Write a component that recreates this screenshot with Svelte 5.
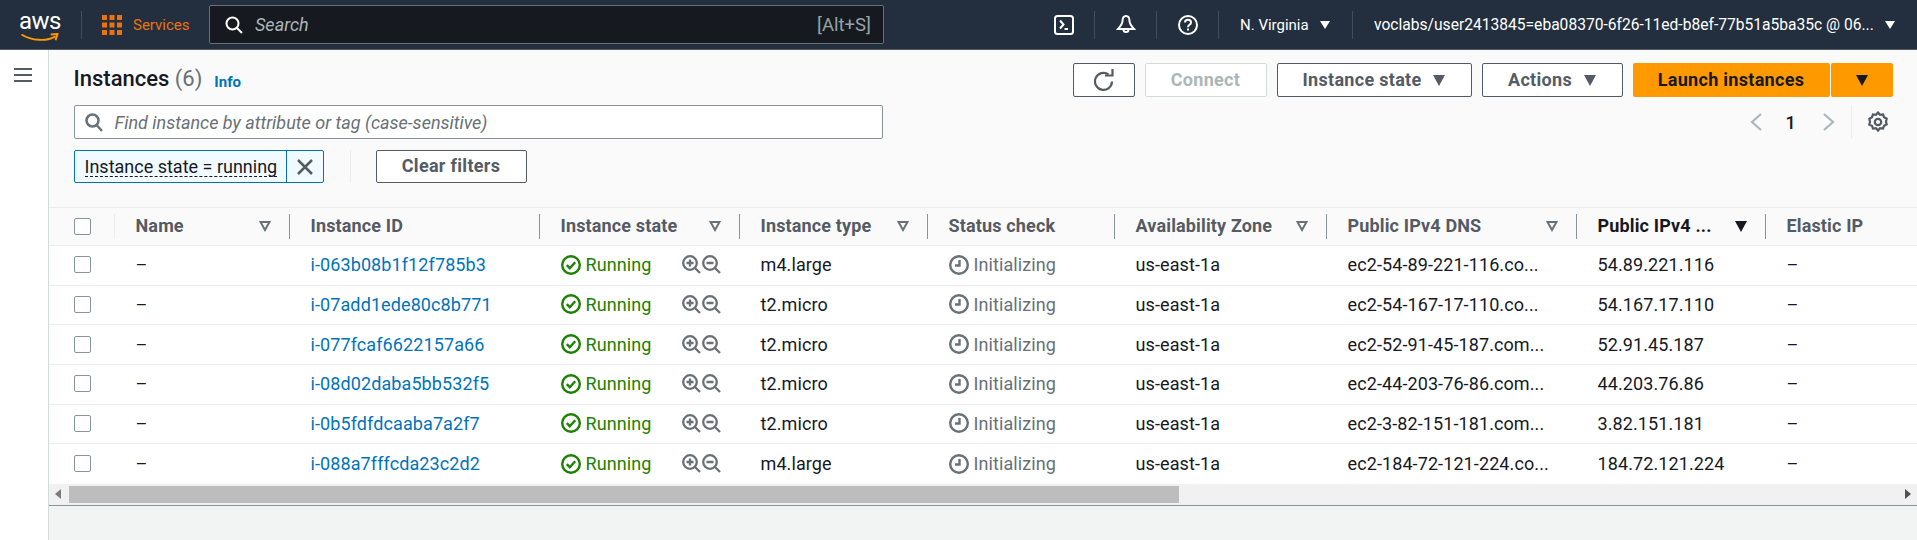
<script>
  const columns = [
    { label: 'Name', width: 175, filter: true },
    { label: 'Instance ID', width: 250 },
    { label: 'Instance state', width: 200, filter: true },
    { label: 'Instance type', width: 188, filter: true },
    { label: 'Status check', width: 187 },
    { label: 'Availability Zone', width: 212, filter: true },
    { label: 'Public IPv4 DNS', width: 250, filter: true },
    { label: 'Public IPv4 ...', width: 189, sorted: true },
    { label: 'Elastic IP', width: 151, last: true }
  ];

  const instances = [
    { id: 'i-063b08b1f12f785b3', type: 'm4.large', dns: 'ec2-54-89-221-116.co...', ip: '54.89.221.116' },
    { id: 'i-07add1ede80c8b771', type: 't2.micro', dns: 'ec2-54-167-17-110.co...', ip: '54.167.17.110' },
    { id: 'i-077fcaf6622157a66', type: 't2.micro', dns: 'ec2-52-91-45-187.com...', ip: '52.91.45.187' },
    { id: 'i-08d02daba5bb532f5', type: 't2.micro', dns: 'ec2-44-203-76-86.com...', ip: '44.203.76.86' },
    { id: 'i-0b5fdfdcaaba7a2f7', type: 't2.micro', dns: 'ec2-3-82-151-181.com...', ip: '3.82.151.181' },
    { id: 'i-088a7fffcda23c2d2', type: 'm4.large', dns: 'ec2-184-72-121-224.co...', ip: '184.72.121.224' }
  ];
</script>

<div class="console">
  <header class="topbar">
    <div class="logo">
      <span class="logo-text">aws</span>
      <svg class="smile" width="40" height="10" viewBox="0 0 40 10">
        <path d="M1 1.5C11 8 27 9 36 3.5" fill="none" stroke="#ff9900" stroke-width="2" />
        <path d="M31 1.5l7-.5-2 6.500" fill="none" stroke="#ff9900" stroke-width="2" />
      </svg>
    </div>
    <span class="bar-sep first"></span>
    <svg class="grid-icon" width="20" height="20" viewBox="0 0 20 20" fill="#ec7211">
      {#each [0, 7.500, 15] as y}
        {#each [0, 7.500, 15] as x}
          <rect {x} {y} width="5" height="5" />
        {/each}
      {/each}
    </svg>
    <span class="services">Services</span>
    <div class="global-search">
      <svg width="18" height="18" viewBox="0 0 18 18" fill="none" stroke="#fff" stroke-width="2">
        <circle cx="7.500" cy="7.500" r="6" />
        <path d="M12 12l5 5" />
      </svg>
      <span class="global-placeholder">Search</span>
      <span class="shortcut">[Alt+S]</span>
    </div>
    <svg class="bar-icon shell" width="20" height="20" viewBox="0 0 20 20" fill="none" stroke="#fff" stroke-width="2">
      <rect x="1" y="1" width="18" height="18" rx="2.500" />
      <path d="M6 5.500l3.500 4L6 13.500M10.500 14H14" />
    </svg>
    <span class="bar-sep"></span>
    <svg class="bar-icon" width="20" height="22" viewBox="0 0 20 22" fill="none" stroke="#fff" stroke-width="2">
      <path d="M10 2C7.500 2 6.500 4.500 6.500 7c0 3-2 5-4.500 8h16c-2.500-3-4.500-5-4.500-8 0-2.500-1-5-3.500-5z" />
      <path d="M7.500 15.500a2.500 2.500 0 0 0 5 0" />
    </svg>
    <span class="bar-sep"></span>
    <svg class="bar-icon" width="20" height="20" viewBox="0 0 20 20" fill="none" stroke="#fff" stroke-width="2">
      <circle cx="10" cy="10" r="9" />
      <path d="M7 7.500C7 5.500 8.500 4.800 10 4.800c1.700 0 3 1 3 2.600 0 2.400-3 2.400-3 4.800" />
      <path d="M10 13.500v2" />
    </svg>
    <span class="bar-sep"></span>
    <span class="region">N. Virginia</span>
    <span class="bar-caret"></span>
    <span class="bar-sep region-sep"></span>
    <span class="account">voclabs/user2413845=eba08370-6f26-11ed-b8ef-77b51a5ba35c @ 06...</span>
    <span class="bar-caret"></span>
  </header>

  <div class="body">
    <nav class="sidenav">
      <svg width="18" height="16" viewBox="0 0 18 16" fill="none" stroke="#545b64" stroke-width="2">
        <path d="M0 2h18M0 8h18M0 14h18" />
      </svg>
    </nav>

    <main class="main">
      <section class="tools">
        <div class="tools-row title-row">
          <h1>Instances <span class="count">(6)</span></h1>
          <a class="info" href="#info">Info</a>
          <div class="actions">
            <button class="btn refresh" aria-label="Refresh">
              <svg width="22" height="24" viewBox="0 0 22 24" fill="none" stroke="#545b64" stroke-width="2.200">
                <path d="M19 13.500a8.500 8.500 0 1 1-3.500-7" />
                <path d="M12 7.500h7.500V1" />
              </svg>
            </button>
            <button class="btn connect" disabled>Connect</button>
            <button class="btn state">Instance state <span class="caret"></span></button>
            <button class="btn menu">Actions <span class="caret"></span></button>
            <div class="split">
              <button class="btn primary">Launch instances</button>
              <button class="btn primary arrow" aria-label="More"><span class="caret dark"></span></button>
            </div>
          </div>
        </div>

        <div class="tools-row filter-row">
          <div class="filter">
            <svg width="18" height="19" viewBox="0 0 18 19" fill="none" stroke="#687078" stroke-width="2.500">
              <circle cx="7.500" cy="7.500" r="6" />
              <path d="M12 12.500l5 5.500" />
            </svg>
            <span class="filter-placeholder">Find instance by attribute or tag (case-sensitive)</span>
          </div>
          <div class="pager">
            <svg width="13" height="20" viewBox="0 0 13 20" fill="none" stroke="#aab7b8" stroke-width="2.200"><path d="M11 2L2 10l9 8" /></svg>
            <span class="page-num">1</span>
            <svg width="13" height="20" viewBox="0 0 13 20" fill="none" stroke="#aab7b8" stroke-width="2.200"><path d="M2 2l9 8-9 8" /></svg>
            <span class="pager-sep"></span>
            <svg width="20" height="22" viewBox="0 0 20 22" fill="none" stroke="#545b64" stroke-width="2.200">
              <path d="M10 1.500l2 2.300 3-.4 1 2.800 2.700 1.300-.7 3 .7 3-2.700 1.300-1 2.800-3-.4-2 2.300-2-2.300-3 .4-1-2.800L1.300 13.700l.7-3-.7-3L4 6.200l1-2.800 3 .4z" />
              <circle cx="10" cy="11" r="3.200" />
            </svg>
          </div>
        </div>

        <div class="tools-row token-row">
          <div class="token">
            <span class="token-label"><span class="dashed">Instance state = running</span></span>
            <span class="token-x">
              <svg width="16" height="16" viewBox="0 0 16 16" fill="none" stroke="#545b64" stroke-width="2.500">
                <path d="M1 1l14 14M15 1L1 15" />
              </svg>
            </span>
          </div>
          <span class="token-sep"></span>
          <button class="btn clear">Clear filters</button>
        </div>
      </section>

      <div class="table-wrap">
        <table>
          <colgroup>
            <col style="width: 66px" />
            {#each columns as col}
              <col style="width: {col.width}px" />
            {/each}
          </colgroup>
          <thead>
            <tr>
              <th><div class="th-in check-col"><span class="checkbox"></span></div></th>
              {#each columns as col}
                <th>
                  <div class="th-in" class:last={col.last} class:sorted={col.sorted}>
                    <span class="th-label">{col.label}</span>
                    {#if col.sorted}
                      <svg width="12" height="11" viewBox="0 0 12 11"><path d="M0 0h12L6 11z" fill="#16191f" /></svg>
                    {:else if col.filter}
                      <svg width="12" height="11" viewBox="0 0 12 11"><path d="M1.500 1h9L6 9z" fill="none" stroke="#687078" stroke-width="2" /></svg>
                    {/if}
                  </div>
                </th>
              {/each}
            </tr>
          </thead>
          <tbody>
            {#each instances as row}
              <tr>
                <td class="check-cell"><span class="checkbox"></span></td>
                <td>–</td>
                <td><a class="link" href="#{row.id}">{row.id}</a></td>
                <td>
                  <div class="state-cell">
                    <svg width="20" height="20" viewBox="0 0 20 20" fill="none" stroke="#1d8102" stroke-width="2.400">
                      <circle cx="10" cy="10" r="8.800" />
                      <path d="M5.800 10.200l3 3 5.400-6" />
                    </svg>
                    <span class="running">Running</span>
                    <span class="zooms">
                      <svg width="19" height="19" viewBox="0 0 19 19" fill="none" stroke="#687078" stroke-width="2.300">
                        <circle cx="8" cy="8" r="6.800" />
                        <path d="M13 13l5 5M8 4.500v7M4.500 8h7" />
                      </svg>
                      <svg width="19" height="19" viewBox="0 0 19 19" fill="none" stroke="#687078" stroke-width="2.300">
                        <circle cx="8" cy="8" r="6.800" />
                        <path d="M13 13l5 5M4.500 8h7" />
                      </svg>
                    </span>
                  </div>
                </td>
                <td>{row.type}</td>
                <td>
                  <div class="status-cell">
                    <svg width="20" height="20" viewBox="0 0 20 20" fill="none" stroke="#687078" stroke-width="2.400">
                      <circle cx="10" cy="10" r="8.800" />
                      <path d="M10.500 5v5.500H6" />
                    </svg>
                    <span>Initializing</span>
                  </div>
                </td>
                <td>us-east-1a</td>
                <td>{row.dns}</td>
                <td>{row.ip}</td>
                <td>–</td>
              </tr>
            {/each}
          </tbody>
        </table>
      </div>

      <div class="scrollbar">
        <span class="arrow-left"></span>
        <span class="thumb"></span>
        <span class="arrow-right"></span>
      </div>
      <div class="footer"></div>
    </main>
  </div>
</div>

<style>
  :global(body) {
    margin: 0;
    background: #fff;
  }

  .console {
    width: 1917px;
    height: 540px;
    overflow: hidden;
    display: flex;
    flex-direction: column;
    font-family: Roboto, "Noto Sans", sans-serif;
    font-size: 18px;
    color: #16191f;
  }

  .topbar {
    height: 49px;
    flex: none;
    display: flex;
    align-items: center;
    background: #232f3e;
    border-bottom: 1px solid #545b64;
    padding-left: 20px;
    color: #fff;
  }

  .logo {
    width: 40px;
    height: 36px;
    display: flex;
    flex-direction: column;
    align-items: center;
  }

  .logo-text {
    font-size: 24px;
    line-height: 24px;
    letter-spacing: -0.5px;
    height: 25px;
    margin-top: 2px;
  }

  .smile {
    display: block;
  }

  .bar-sep {
    width: 1px;
    height: 28px;
    background: #414d5c;
    margin: 0 21px 0 20px;
  }

  .bar-sep.first {
    margin: 0 20px 0 21px;
  }

  .bar-sep.region-sep {
    margin: 0 21px 0 22px;
  }

  .grid-icon {
    margin-right: 11px;
  }

  .services {
    width: 56px;
    color: #ec7211;
    font-size: 15px;
    margin-right: 20px;
    white-space: nowrap;
  }

  .global-search {
    width: 646px;
    height: 37px;
    border: 1px solid #687078;
    border-radius: 2px;
    background: #16191f;
    display: flex;
    align-items: center;
    padding-left: 15px;
    padding-right: 12px;
    margin-right: 170px;
  }

  .global-placeholder {
    margin-left: 12px;
    font-style: italic;
    color: #aab7b8;
    font-size: 18px;
  }

  .shortcut {
    margin-left: auto;
    color: #95a5a6;
    font-size: 18.5px;
  }

  .region {
    width: 71px;
    margin-right: 9px;
    font-size: 15px;
    white-space: nowrap;
  }

  .account {
    width: 511px;
    font-size: 15.6px;
    white-space: nowrap;
  }

  .bar-caret {
    width: 0;
    height: 0;
    border-left: 5px solid transparent;
    border-right: 5px solid transparent;
    border-top: 8px solid #fff;
  }

  .body {
    flex: 1;
    display: flex;
    min-height: 0;
  }

  .sidenav {
    width: 34px;
    flex: none;
    border-right: 1px solid #d5dbdb;
    background: #fff;
    padding: 17px 0 0 14px;
  }

  .sidenav svg {
    display: block;
  }

  .main {
    flex: 1;
    min-width: 0;
    display: flex;
    flex-direction: column;
    background: #fafafa;
  }

  .tools {
    padding: 13px 24.5px 24px;
  }

  .tools-row {
    display: flex;
    align-items: center;
  }

  .title-row {
    height: 34px;
  }

  h1 {
    margin: 0 0 2px;
    font-size: 22px;
    font-weight: 500;
    line-height: 30px;
    color: #16191f;
  }

  .count {
    font-weight: 400;
    color: #687078;
  }

  .info {
    margin-left: 12px;
    margin-top: 3px;
    color: #0073bb;
    font-size: 15px;
    font-weight: 700;
    text-decoration: none;
  }

  .actions {
    margin-left: auto;
    display: flex;
    gap: 10px;
  }

  .btn {
    height: 34px;
    box-sizing: border-box;
    border: 1px solid #545b64;
    border-radius: 2px;
    background: #fff;
    color: #545b64;
    font-family: inherit;
    font-size: 18px;
    font-weight: 700;
    letter-spacing: 0.3px;
    padding: 0 0 2px;
    display: flex;
    align-items: center;
    justify-content: center;
  }

  .refresh { width: 62px; padding: 0; }
  .connect {
    width: 122px;
    border-color: #d5dbdb;
    color: #aab7b8;
  }
  .state { width: 195px; gap: 12px; }
  .menu { width: 141px; gap: 12px; }

  .split {
    display: flex;
    gap: 1px;
  }

  .primary {
    width: 197px;
    background: #ff9900;
    border-color: #ff9900;
    color: #16191f;
  }

  .arrow { width: 62px; padding: 0; }

  .caret {
    width: 0;
    height: 0;
    margin-top: 2px;
    border-left: 6.5px solid transparent;
    border-right: 6.5px solid transparent;
    border-top: 11px solid #545b64;
  }

  .caret.dark {
    border-top-color: #16191f;
    margin-top: 0;
  }

  .filter-row {
    margin-top: 8px;
    height: 34px;
    justify-content: space-between;
  }

  .filter {
    width: 809px;
    height: 34px;
    box-sizing: border-box;
    border: 1px solid #879596;
    border-radius: 2px;
    background: #fff;
    display: flex;
    align-items: center;
    padding-left: 10px;
  }

  .filter-placeholder {
    margin-left: 12px;
    font-style: italic;
    color: #687078;
    font-size: 18px;
  }

  .pager {
    height: 34px;
    display: flex;
    align-items: center;
    margin-right: 5px;
  }

  .page-num {
    width: 10px;
    margin: 0 26px 0 23px;
    font-weight: 500;
    text-align: center;
  }

  .pager-sep {
    width: 1px;
    height: 34px;
    background: #eaeded;
    margin: 0 16px;
  }

  .token-row {
    margin-top: 11px;
    height: 33px;
  }

  .token {
    width: 250px;
    height: 33px;
    box-sizing: border-box;
    display: flex;
    border: 1px solid #0073bb;
    border-radius: 2px;
    background: #f1faff;
  }

  .token-label {
    flex: 1;
    display: flex;
    align-items: center;
    padding-left: 10px;
    color: #16191f;
    white-space: nowrap;
  }

  .dashed {
    border-bottom: 1px dashed #16191f;
    line-height: 19px;
  }

  .token-x {
    width: 36px;
    border-left: 1px solid #0073bb;
    display: flex;
    align-items: center;
    justify-content: center;
  }

  .token-sep {
    width: 1px;
    height: 33px;
    background: #eaeded;
    margin: 0 26px;
  }

  .clear {
    width: 151px;
    height: 33px;
    margin-left: -1px;
  }

  .table-wrap {
    overflow: hidden;
  }

  table {
    table-layout: fixed;
    width: 1868px;
    border-collapse: separate;
    border-spacing: 0;
  }

  th {
    height: 39px;
    box-sizing: border-box;
    padding: 0;
    background: #fafafa;
    border-top: 1px solid #eaeded;
    border-bottom: 1px solid #eaeded;
    font-weight: 700;
    text-align: left;
    color: #545b64;
    white-space: nowrap;
  }

  .th-in {
    height: 25px;
    display: flex;
    align-items: center;
    justify-content: space-between;
    padding: 0 18px 0 20.5px;
    border-right: 1px solid #879596;
  }

  .th-label {
    letter-spacing: 0.15px;
    margin-top: -2px;
  }

  .th-in.last {
    border-right: none;
  }

  .th-in.sorted {
    color: #16191f;
  }

  .th-in.check-col {
    padding-left: 24.5px;
    border-right-color: #eaeded;
  }

  td {
    height: 39.67px;
    box-sizing: border-box;
    padding: 0 0 1px 20.5px;
    background: #fff;
    border-bottom: 1px solid #eaeded;
    white-space: nowrap;
    letter-spacing: 0.1px;
    color: #16191f;
  }

  tbody tr:last-child td {
    border-bottom: none;
  }

  .check-cell {
    padding-left: 24.5px;
  }

  .checkbox {
    display: block;
    width: 17px;
    height: 17px;
    box-sizing: border-box;
    border: 1px solid #879596;
    border-radius: 2px;
    background: #fff;
  }

  .link {
    color: #0073bb;
    text-decoration: none;
  }

  .state-cell,
  .status-cell {
    display: flex;
    align-items: center;
  }

  .running {
    width: 96px;
    margin-left: 5px;
    color: #1d8102;
  }

  .zooms {
    display: flex;
    gap: 1px;
  }

  .status-cell span {
    margin-left: 5px;
    color: #687078;
  }

  .scrollbar {
    height: 21px;
    flex: none;
    display: flex;
    align-items: center;
    background: #f1f1f1;
    padding-left: 6px;
  }

  .arrow-left {
    width: 0;
    height: 0;
    border-top: 5px solid transparent;
    border-bottom: 5px solid transparent;
    border-right: 6px solid #7b7b7b;
  }

  .thumb {
    width: 1110px;
    height: 17px;
    margin-left: 8px;
    background: #bdbdbd;
  }

  .arrow-right {
    width: 0;
    height: 0;
    border-top: 5px solid transparent;
    border-bottom: 5px solid transparent;
    border-left: 6px solid #505050;
    margin-left: auto;
    margin-right: 6px;
  }

  .footer {
    flex: 1;
    background: #f2f3f3;
    border-top: 1px solid #879596;
  }
</style>
